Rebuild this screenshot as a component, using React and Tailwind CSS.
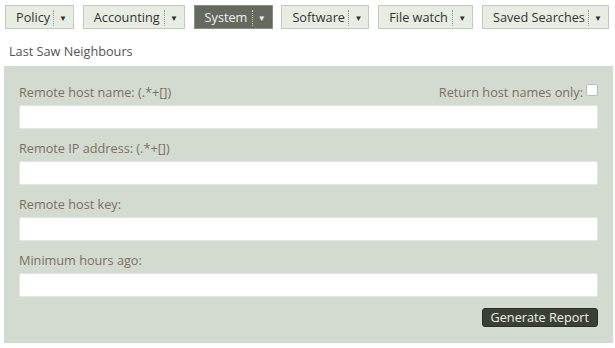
import { useState } from 'react';

const MENUS = [
  { label: 'Policy', w: 'w-[69px]' },
  { label: 'Accounting', w: 'w-[102px]' },
  { label: 'System', w: 'w-[79px]' },
  { label: 'Software', w: 'w-[88px]' },
  { label: 'File watch', w: 'w-[95px]' },
  { label: 'Saved Searches', w: 'w-[127px]' },
];

const FIELDS = [
  'Remote host name: (.*+[])',
  'Remote IP address: (.*+[])',
  'Remote host key:',
  'Minimum hours ago:',
];

function MenuButton({ label, w, active }) {
  return (
    <div
      className={`flex items-center whitespace-nowrap h-[24px] border pl-[10px] pr-[6px] pt-[1px] text-[12.7px] ${w} ${
        active
          ? 'bg-[#656a5f] border-[#8a8f84] text-[#f2f2ee]'
          : 'bg-[#e7ede2] border-[#c4c9c0] text-[#333]'
      }`}
    >
      <span>{label}</span>
      <span
        className={`ml-auto h-[16px] border-l border-dotted ${
          active ? 'border-[#c8ccc4]' : 'border-[#999]'
        }`}
      />
      <span className="ml-[5px] text-[8px] leading-none">▼</span>
    </div>
  );
}

export default function App() {
  const [hostOnly, setHostOnly] = useState(false);

  return (
    <div className="w-[615px] h-[348px] bg-white font-['Open_Sans',sans-serif] overflow-hidden">
      {/* top menu */}
      <div className="flex justify-between w-[609px] pl-[5px] pt-[5px]">
        {MENUS.map(m => (
          <MenuButton key={m.label} label={m.label} w={m.w} active={m.label === 'System'} />
        ))}
      </div>

      <div className="pl-[9px] pt-[13px] text-[12.7px] text-[#555] leading-[18px]">
        Last Saw Neighbours
      </div>

      {/* report form */}
      <div className="mt-[6px] ml-[4px] w-[609px] h-[277px] bg-[#d3dbd0] px-[15px] pt-[15px]">
        {FIELDS.map((f, i) => (
          <div key={f} className={i === 0 ? '' : 'mt-[8px]'}>
            <div className="flex justify-between items-end h-[20px] text-[12.7px] text-[#7b6f62] leading-[18px]">
              <span>{f}</span>
              {i === 0 && (
                <label className="flex items-center gap-[3px]">
                  Return host names only:
                  <input
                    type="checkbox"
                    checked={hostOnly}
                    onChange={e => setHostOnly(e.target.checked)}
                    className="appearance-none w-[12px] h-[12px] bg-white border border-[#b9bdb5] rounded-[2px] mb-[4px]"
                  />
                </label>
              )}
            </div>
            <input
              type="text"
              className="block mt-[4px] w-[579px] h-[24px] bg-white border border-[#e4e6e2] rounded-[2px] outline-none"
            />
          </div>
        ))}

        <div className="flex justify-end mt-[11px]">
          <button className="h-[19px] px-[8px] bg-[#3b4036] border border-[#2a2e27] rounded-[3px] text-[#eef0ea] text-[12.7px] leading-none">
            Generate Report
          </button>
        </div>
      </div>
    </div>
  );
}
